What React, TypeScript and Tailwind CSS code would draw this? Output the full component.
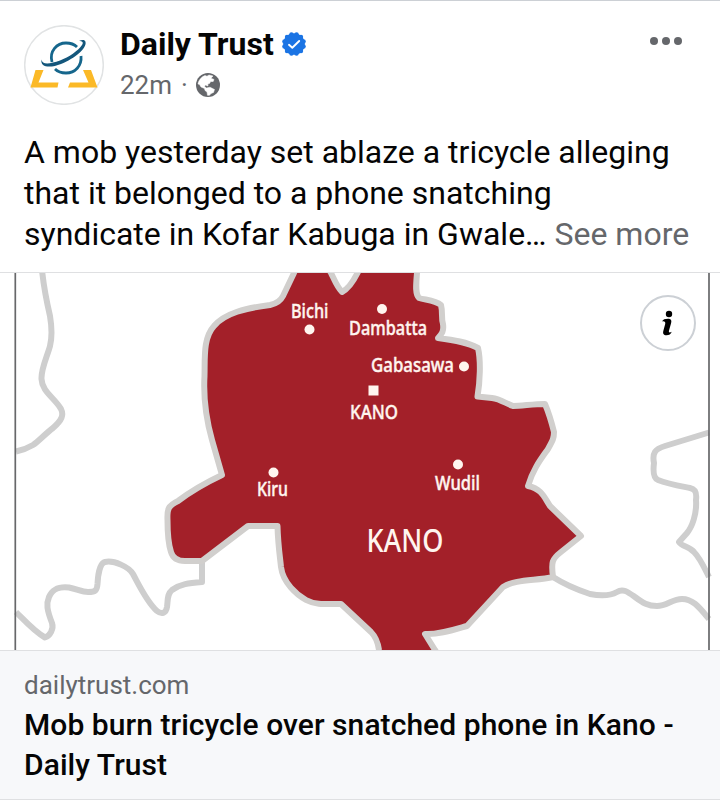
interface Place {
  name: string;
  x: number;
  y: number;
  width: number;
  size: number;
  marker?: { x: number; y: number; square?: boolean };
}

const places: Place[] = [
  { name: "Bichi", x: 291, y: 317.5, width: 37.5, size: 19, marker: { x: 309.5, y: 329.5 } },
  { name: "Dambatta", x: 349, y: 334.5, width: 78, size: 19, marker: { x: 382, y: 309 } },
  { name: "Gabasawa", x: 371, y: 372, width: 83, size: 19, marker: { x: 464, y: 366.5 } },
  { name: "KANO", x: 350, y: 418.5, width: 48, size: 19.5, marker: { x: 373.5, y: 390.5, square: true } },
  { name: "Kiru", x: 257, y: 496, width: 31, size: 19, marker: { x: 273.5, y: 472.5 } },
  { name: "Wudil", x: 435, y: 489.5, width: 45, size: 19, marker: { x: 458, y: 464.5 } },
  { name: "KANO", x: 366.5, y: 551.5, width: 77, size: 32 },
];

const neighbours = [
  "M42 270C44 290 47 303 50 316C52 328 52 338 50 346C47 357 41 369 41.5 379C42 392 55 398 61 409C64 415 62 420 53 428C45 434 38 442 33 445C28 448 23 450 16 451.5",
  "M16 612C26 622 35 632 45 637.5C50 636 54 629 52 623C47 610 46 604 49 597C53 588 60 586.5 69 587.5C77 589 82 592 88 592C96 592 97 590 97.5 584C98 574 100 563 105 562C114 560 129 567 133 574C140 587 147 602 157 611C162 615 166 613 167 607C168 600 167 594 172 590C180 584 189 583 202 582V561",
  "M709 432.5L665 446C655 449 652 453 654 463C653 471 653 478 658 480C668 484 680 486 690 488C695 489 697 492 696 500C697 514 692 527 687 533L679 542C682 547 689 546 694 552C700 558 704 567 709 577",
  "M553 577C567 586 581 591 590 594C600 596 610 596 617 592C623 588 628 592 635 597C643 603 648 606 657 606C667 606 672 599 682 599C693 599 699 607 709 619",
];

const kano =
  "M296 268L294 273L283 296C280 302 275 304 270 305C246 308 225 313 214 326C203 338 205 358 204.5 376C203 402 207 422 212 440L222 475C205 483 190 492 178 501C168 506 167 509 167.5 520C167.5 530 168 543 171 552C173 559 178 561 185 561H202L248 526H277.5C278 545 280 557 281 567C283 583 297 595 306 600C315 605 326 604 341 604L371 632C376 637 378 643 379 650L380 656H439L435 650L425 634C438 635 453 630 467 626L503 587C516 579 536 581 553 577C551 562 552 559 561 552L581 536L550 506C544 497 542 489 528 486C533 469 541 459 548 449C553 440 554 438 554 432C551 420 548 411 545 404C533 404 522 406 513 406C505 403 500 399 492 398L477.5 396.5C480 382 481 361 478 348C467 342 454 340 438 338C442 334 444 331 443 324C441 317 443 313 441 305C435 300 425 300 419 298C415 294 416 285 417 273V268H360L357.5 273C353 282 348 289 342 292C337 287 334 279 331 273L328 268Z";

function Avatar() {
  return (
    <svg className="w-20 h-20 shrink-0" viewBox="24 25 80 80" fill="none">
      <circle cx="64" cy="65" r="39.3" fill="#fff" stroke="#e1e3e4" strokeWidth="1.5" />
      <path d="M35.5 70H43.5L38.5 82.5H58.5L57.5 87.5H30.5Z" fill="#fbb927" />
      <path d="M83 70H91L97.5 87.5H68L70 82.5H88.5Z" fill="#fbb927" />
      <path d="M52 62C49 51 57 43 66 43C71 43 75 45 77 47" stroke="#15668c" strokeWidth="2.8" />
      <path d="M81 56C82 66 75 73 66 73C61 73 57 71 55 69" stroke="#15668c" strokeWidth="2.8" />
      <path
        d="M41.5 59.5C40 68 51 68 61 64C75 58.5 87 48 85.5 42C85 39.5 82 39.5 79 41C82 41 84 42 82 45C78 51 69 57 60 60.5C50 64 42 65 41.5 59.5Z"
        fill="#14577c"
      />
    </svg>
  );
}

function VerifiedBadge() {
  return (
    <svg className="w-6 h-6" viewBox="-12 -12 24 24" fill="#1b74e4">
      <circle r="10.8" />
      {Array.from({ length: 12 }, (_, i) => {
        const angle = ((i * 30 + 15) * Math.PI) / 180;
        return <circle key={i} cx={Math.cos(angle) * 9.9} cy={Math.sin(angle) * 9.9} r="2.2" />;
      })}
      <path
        d="M-5 .8L-1.7 3.7L5.2 -3"
        fill="none"
        stroke="#fff"
        strokeWidth="1.9"
        strokeLinecap="round"
        strokeLinejoin="round"
      />
    </svg>
  );
}

function Globe() {
  return (
    <svg className="w-6 h-6" viewBox="0 0 24 24">
      <circle cx="12" cy="12" r="12" fill="#65676b" />
      <path
        d="M2 11C2.6 7 5.5 3.8 9 2.5L11 3.2L13 2L17 3L15 5.2L18 6.5L17.2 8.5L14.7 8.5L13.5 10.5L11.8 11L12 13L9.3 12L8.5 13.5L10.5 15L14 14.2L18.5 16.5L17.5 19.5L15 20.5L13.5 22.3H11.5L11 19L9 17.5L8.5 15.5L5 14L3.5 11.5Z"
        fill="#fff"
        stroke="#fff"
        strokeWidth=".5"
        strokeLinejoin="round"
      />
    </svg>
  );
}

function PostHeader() {
  return (
    <header className="flex items-start pl-6 pr-[38px] pt-6">
      <Avatar />
      <div className="ml-4 flex-1">
        <div className="flex items-center gap-2 h-[38px]">
          <h1 className="text-[32px] font-bold leading-[38px]">Daily Trust</h1>
          <VerifiedBadge />
        </div>
        <div className="flex items-center h-[44px] text-[26px] text-[#65676b]">
          <span className="pt-px">22m</span>
          <span className="ml-[9px] mr-2">·</span>
          <Globe />
        </div>
      </div>
      <button className="flex gap-1 mt-3" aria-label="More">
        <span className="w-2 h-2 rounded-full bg-[#65676b]" />
        <span className="w-2 h-2 rounded-full bg-[#65676b]" />
        <span className="w-2 h-2 rounded-full bg-[#65676b]" />
      </button>
    </header>
  );
}

function KanoMap() {
  return (
    <svg className="block w-full h-full" viewBox="0 273 720 377">
      <g fill="none" stroke="#cecece" strokeWidth="6" strokeLinejoin="round">
        {neighbours.map((d) => (
          <path key={d} d={d} />
        ))}
      </g>
      <path d={kano} fill="#a32029" stroke="#d1cfcd" strokeWidth="6" strokeLinejoin="round" />
      <path d="M15.3 273V650M709 273V650" stroke="#67686a" strokeWidth="1.7" />
      {places.map(({ name, x, y, width, size, marker }) => (
        <g key={`${name}-${y}`} fill="#fff5ef">
          {marker &&
            (marker.square ? (
              <rect x={marker.x - 5} y={marker.y - 5} width="10" height="10" />
            ) : (
              <circle cx={marker.x} cy={marker.y} r="5" />
            ))}
          <text
            x={x}
            y={y}
            fontSize={size}
            textLength={width}
            lengthAdjust="spacingAndGlyphs"
            stroke="#fff5ef"
            strokeWidth={marker ? 0.4 : 0}
            className="font-['Noto_Sans',sans-serif] font-medium"
          >
            {name}
          </text>
        </g>
      ))}
    </svg>
  );
}

function InfoButton() {
  return (
    <button
      className="absolute top-[22px] right-6 w-14 h-14 rounded-full bg-white border-2 border-[#ccd0d5] flex items-center justify-center"
      aria-label="Link information"
    >
      <svg className="w-6 h-7" viewBox="656 309 24 28">
        <circle cx="669" cy="314" r="3.2" />
        <path d="M662 321.5C663 319.5 665 318.8 668 318.8C671.5 318.8 671.8 321 671 323.5L669 330.5C668.5 332.5 669.5 333 671.7 331.8C671 334.2 669 335.3 666.5 335.3C663.5 335.3 662.7 333.5 663.3 331L665.2 324C665.7 322 664.5 321 662 321.5Z" />
      </svg>
    </button>
  );
}

export default function App() {
  return (
    <article className="w-[720px] h-[800px] flex flex-col overflow-hidden bg-white border-t border-[#ccd0d5] font-[Roboto,sans-serif] text-[#050505]">
      <PostHeader />
      <p className="h-[165px] pl-6 pt-6 mt-px text-[32px] leading-[41px] whitespace-nowrap">
        A mob yesterday set ablaze a tricycle alleging
        <br />
        that it belonged to a phone snatching
        <br />
        syndicate in Kofar Kabuga in Gwale… <span className="text-[#65676b]">See more</span>
      </p>
      <div className="relative h-[378px] border-t border-[#dfe0e2]">
        <KanoMap />
        <InfoButton />
      </div>
      <footer className="h-[150px] pl-6 pt-[15px] bg-[#f7f8fa] border-y border-[#dfe0e2] whitespace-nowrap">
        <p className="text-[26px] leading-[39px] text-[#65676b]">dailytrust.com</p>
        <h2 className="text-[30px] leading-10 font-medium tracking-[0.06px]">
          Mob burn tricycle over snatched phone in Kano -
          <br />
          Daily Trust
        </h2>
      </footer>
    </article>
  );
}
